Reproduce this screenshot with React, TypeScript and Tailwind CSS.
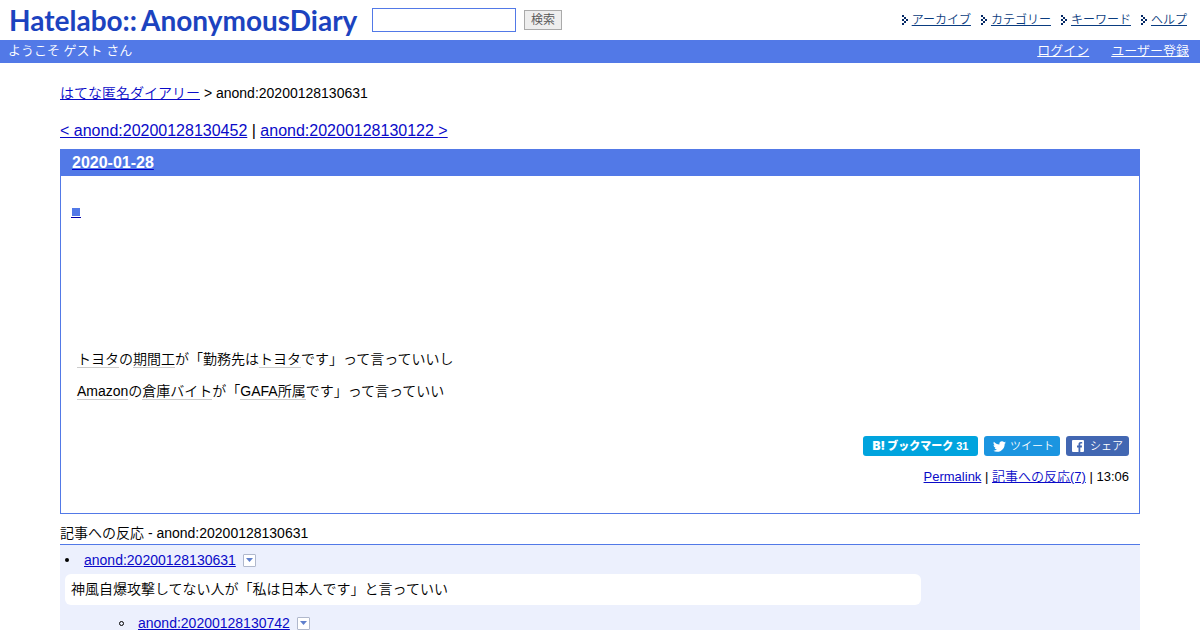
import { ReactNode } from "react";

const JP = "font-['Liberation_Sans','Noto_Sans_CJK_JP',sans-serif]";
const LINK = "text-[#0a0ac8] underline";

function Arrow() {
  return (
    <svg width="6" height="10" viewBox="0 0 6 10" shapeRendering="crispEdges" fill="#062a66" aria-hidden="true">
      <path d="M0 0h2v2h-2zM2 2h2v2h-2zM4 4h2v2h-2zM2 6h2v2h-2zM0 8h2v2h-2zM0 4h2v2h-2z" />
    </svg>
  );
}

function Keyword({ children }: { children: ReactNode }) {
  return (
    <a href="#keyword" className="border-b border-[#cccccc]">
      {children}
    </a>
  );
}

function Dropdown() {
  return (
    <button type="button" aria-label="メニュー" className="ml-[7px] flex h-[13px] w-[13px] items-center justify-center rounded-[1px] border border-[#b0b8cc] bg-white">
      <svg width="7" height="4" viewBox="0 0 7 4" fill="#6080cc" aria-hidden="true">
        <path d="M0 0h7L3.500 4z" />
      </svg>
    </button>
  );
}

export default function App() {
  return (
    <div className={`${JP} min-h-screen bg-white font-[350] text-black`} lang="ja">
      <header>
        <div className="flex h-10 items-center pr-[13px] pl-[9px]">
          <a href="#top" className="flex w-[350px] items-baseline gap-1 font-['Lato',sans-serif] text-[28px] leading-10 font-bold text-[#1c43bf]">
            <span>Hatelabo::</span>
            <span>AnonymousDiary</span>
          </a>
          <form className="ml-[13px] flex items-center gap-2" onSubmit={(e) => e.preventDefault()}>
            <input type="text" aria-label="検索語" className="h-6 w-36 border border-[#5279e7] bg-white px-1 text-[13px]" />
            <button type="submit" className="h-5 w-[38px] border border-[#aaaaaa] bg-[#eeeeee] text-xs leading-4 text-[#555555]">
              検索
            </button>
          </form>
          <nav className="ml-auto flex gap-[10px] text-xs">
            {["アーカイブ", "カテゴリー", "キーワード", "ヘルプ"].map((t) => (
              <span key={t} className="flex items-center gap-1">
                <Arrow />
                <a href="#nav" className="text-[#0a3c80] underline">{t}</a>
              </span>
            ))}
          </nav>
        </div>
        <div className="flex h-[23px] items-center justify-between bg-[#5279e7] pr-[11px] pb-px pl-2 text-[13px] leading-5 text-white">
          <span>ようこそ ゲスト さん</span>
          <span className="flex gap-[22px]">
            <a href="#login" className="underline">ログイン</a>
            <a href="#register" className="underline">ユーザー登録</a>
          </span>
        </div>
      </header>

      <main className="mx-[60px] pt-5">
        <div className="text-sm leading-5">
          <a href="#home" className={LINK}>はてな匿名ダイアリー</a> &gt; anond:20200128130631
        </div>
        <div className="mt-4 text-base leading-6">
          <a href="#prev" className={LINK}>&lt; anond:20200128130452</a> | <a href="#next" className={LINK}>anond:20200128130122 &gt;</a>
        </div>

        <article className="mt-[6px] border border-[#5279e7] pb-[26px]">
          <h2 className="bg-[#5279e7] pb-px pl-[11px] text-base leading-[25px] font-bold text-white">
            <a href="#date" className="underline decoration-[#0000cc]">2020-01-28</a>
          </h2>
          <div className="px-[10px]">
            <h3 className="mt-6 h-6 leading-6">
              <a href="#entry" aria-label="■" className="inline-block border-b border-[#0000aa] px-px pb-px align-middle">
                <span className="block h-2 w-2 bg-[#5279e7]" />
              </a>
            </h3>
            <div className="mt-[127px] px-[6px] text-sm leading-4">
              <p>
                <Keyword>トヨタ</Keyword>の<Keyword>期間工</Keyword>が「勤務先は<Keyword>トヨタ</Keyword>です」って言っていいし
              </p>
              <p className="mt-4">
                <Keyword>Amazon</Keyword>の<Keyword>倉庫</Keyword><Keyword>バイト</Keyword>が「<Keyword>GAFA</Keyword><Keyword>所属</Keyword>です」って言っていい
              </p>
            </div>
            <div className="mt-[37px] flex justify-end gap-[6px] text-[11px] leading-5 text-white">
              <a href="#bookmark" className="flex h-5 w-[115px] items-center justify-center gap-[3px] rounded-[3px] bg-[#00a4de]">
                <span className="flex items-center gap-0.5 font-black">
                  <span className="font-['Inter',sans-serif] text-xs">B!</span>
                  <span>ブックマーク</span>
                </span>
                <span className="font-bold">31</span>
              </a>
              <a href="#tweet" className="flex h-5 w-[76px] items-center justify-end gap-1 rounded-[3px] bg-[#1b95e0] pr-[6px]">
                <svg width="13" height="13" viewBox="0 0 24 24" fill="white" aria-hidden="true">
                  <path d="M23.950 4.570a10 10 0 0 1-2.820.775 4.960 4.960 0 0 0 2.160-2.723c-.950.555-2.010.959-3.130 1.184a4.920 4.920 0 0 0-8.380 4.482C7.690 8.090 4.070 6.130 1.640 3.160a4.820 4.820 0 0 0-.666 2.475c0 1.710.870 3.213 2.190 4.096a4.900 4.900 0 0 1-2.230-.616v.060a4.920 4.920 0 0 0 3.950 4.827 5 5 0 0 1-2.210.085 4.940 4.940 0 0 0 4.600 3.419A9.870 9.870 0 0 1 0 19.540a13.990 13.990 0 0 0 7.550 2.209c9.050 0 14-7.496 14-13.985 0-.210 0-.420-.015-.630a9.940 9.940 0 0 0 2.460-2.548z" />
                </svg>
                ツイート
              </a>
              <a href="#share" className="flex h-5 w-[63px] items-center justify-center gap-[6px] rounded-[3px] bg-[#4267b2]">
                <svg width="12" height="12" viewBox="0 0 12 12" aria-hidden="true">
                  <path fill="white" d="M1 0h10a1 1 0 0 1 1 1v10a1 1 0 0 1-1 1H8.300V7.400h1.500l.25-1.800H8.300V4.500c0-.5.150-.9.900-.9h1V2c-.2 0-.8-.1-1.400-.1-1.400 0-2.300.850-2.300 2.400v1.300H5v1.800h1.500V12H1a1 1 0 0 1-1-1V1a1 1 0 0 1 1-1z" />
                </svg>
                シェア
              </a>
            </div>
            <p className="mt-[11px] text-right text-[13px] leading-5">
              <a href="#permalink" className={LINK}>Permalink</a> | <a href="#reactions" className={LINK}>記事への反応(7)</a> | 13:06
            </p>
          </div>
        </article>

        <section id="reactions">
          <h3 className="mt-[9px] border-b border-[#5279e7] pb-px text-sm leading-5">記事への反応 - anond:20200128130631</h3>
          <ul className="bg-[#ecf0fd] px-[5px] pt-[5px] pb-4 text-sm leading-5">
            <li>
              <div className="flex items-center">
                <span className="mr-[15px] h-1 w-1 rounded-full bg-black" />
                <a href="#r1" className={LINK}>anond:20200128130631</a>
                <Dropdown />
              </div>
              <p className="mt-1 w-4/5 rounded-md bg-white px-[6px] pt-[5px] pb-[6px]">
                神風自爆攻撃してない人が「私は日本人です」と言っていい
              </p>
              <ul className="mt-2 pl-[54px]">
                <li className="flex items-center">
                  <span className="mr-[14px] h-[5px] w-[5px] rounded-full border border-black" />
                  <a href="#r2" className={LINK}>anond:20200128130742</a>
                  <Dropdown />
                </li>
              </ul>
            </li>
          </ul>
        </section>
      </main>
    </div>
  );
}
